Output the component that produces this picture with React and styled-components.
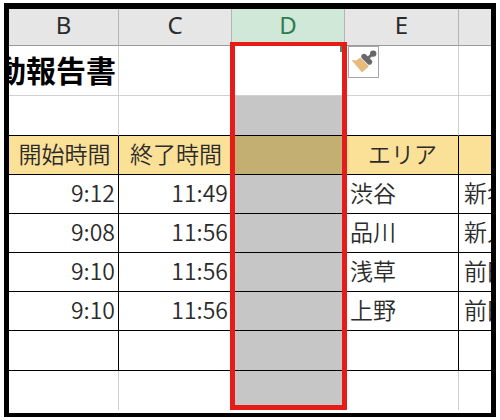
import React from "react";
import styled, { createGlobalStyle } from "styled-components";

const rows = [
  { start: "9:12", end: "11:49", area: "渋谷", name: "新名" },
  { start: "9:08", end: "11:56", area: "品川", name: "新人" },
  { start: "9:10", end: "11:56", area: "浅草", name: "前田" },
  { start: "9:10", end: "11:56", area: "上野", name: "前田" }
];

const BrushIcon = () => (
  <svg width="29" height="30" viewBox="0 0 29 30" aria-hidden="true">
    <path d="M2.5 13 L7 13.4 L11.3 10.6 L20 19.3 L13 25.6 Z" fill="#e6bb7c" />
    <path
      d="M15 9.5 L20.5 15"
      stroke="#686868"
      strokeWidth="5.4"
      strokeLinecap="round"
    />
    <path d="M18 12 L24 6.5" stroke="#686868" strokeWidth="3" />
    <circle cx="24.2" cy="6.6" r="3.2" fill="#686868" />
  </svg>
);

const App = () => (
  <>
    <GlobalStyle />
    <Frame>
      <Sheet>
        <Grid>
          <colgroup>
            <Column size={110} />
            <Column size={113} />
            <Column size={113} />
            <Column size={114} />
            <col />
          </colgroup>
          <thead>
            <tr>
              <Letter>B</Letter>
              <Letter>C</Letter>
              <Letter selected>D</Letter>
              <Letter>E</Letter>
              <Letter />
            </tr>
          </thead>
          <tbody>
            <Row size={50}>
              <Cell>
                <Title>動報告書</Title>
              </Cell>
              <Cell />
              <Cell />
              <Cell />
              <Cell />
            </Row>
            <Row size={40}>
              <Cell above />
              <Cell above />
              <Cell above selected />
              <Cell above />
              <Cell above />
            </Row>
            <Row size={39}>
              <Heading>開始時間</Heading>
              <Heading>終了時間</Heading>
              <Heading selected />
              <Heading>エリア</Heading>
              <Heading />
            </Row>
            {rows.map((row, i) => (
              <Row size={39} key={i}>
                <Time>{row.start}</Time>
                <Time>{row.end}</Time>
                <Ruled selected />
                <Ruled>{row.area}</Ruled>
                <Ruled>{row.name}</Ruled>
              </Row>
            ))}
            <Row size={40}>
              <Ruled />
              <Ruled />
              <Ruled selected />
              <Ruled />
              <Ruled />
            </Row>
            <Row size={39}>
              <Cell last />
              <Cell last />
              <Cell last selected />
              <Cell last />
              <Cell last />
            </Row>
          </tbody>
        </Grid>
        <Highlight />
        <PasteOptions aria-label="書式オプション">
          <BrushIcon />
        </PasteOptions>
      </Sheet>
    </Frame>
  </>
);

const GlobalStyle = createGlobalStyle`
  * {
    box-sizing: border-box;
  }
  body {
    margin: 0;
    background-color: white;
    font-family: "Noto Sans CJK JP", sans-serif;
  }
`;

const Frame = styled.main`
  margin: 3px 4px;
  padding-bottom: 3px;
  border: 5px solid black;
  border-top-width: 6px;
  border-bottom-width: 4px;
  background-color: white;
`;

const Sheet = styled.div`
  position: relative;
  overflow: hidden;
`;

const Grid = styled.table`
  width: 100%;
  table-layout: fixed;
  border-collapse: separate;
  border-spacing: 0;
  color: #2b2b2b;
`;

const Column = styled.col.withConfig({
  shouldForwardProp: prop => prop !== "size"
})`
  width: ${props => props.size}px;
`;

const Row = styled.tr.withConfig({
  shouldForwardProp: prop => prop !== "size"
})`
  height: ${props => props.size}px;
`;

const Letter = styled.th.withConfig({
  shouldForwardProp: prop => prop !== "selected"
})`
  height: 37px;
  padding: 0 0 4px;
  border-right: 1px solid #b4b4b4;
  border-bottom: 1px solid #9a9a9a;
  background-color: ${props => (props.selected ? "#cfe8d8" : "#e6e6e6")};
  color: ${props => (props.selected ? "#2f7d55" : "#2b2b2b")};
  font-family: "Noto Sans", sans-serif;
  font-size: 24px;
  font-weight: 400;
  line-height: 32px;

  &:last-child {
    border-right: none;
  }
`;

const Cell = styled.td.withConfig({
  shouldForwardProp: prop => !["selected", "above", "last"].includes(prop)
})`
  padding: 0;
  border-right: 1px solid #d0d0d0;
  border-bottom: ${props =>
    props.last ? "none" : props.above ? "1px solid black" : "1px solid #d0d0d0"};
  background-color: ${props => (props.selected ? "#c6c6c6" : "white")};

  &:last-child {
    border-right: none;
  }
`;

const Ruled = styled.td.withConfig({
  shouldForwardProp: prop => prop !== "selected"
})`
  padding: 0 3px 4px 5px;
  border-right: 1px solid black;
  border-bottom: 1px solid black;
  background-color: ${props => (props.selected ? "#c6c6c6" : "white")};
  font-size: 23px;
  font-weight: 350;
  line-height: 32px;
  white-space: nowrap;
  overflow: hidden;

  &:last-child {
    border-right: none;
  }
`;

const Time = styled(Ruled)`
  text-align: right;
`;

const Heading = styled(Ruled)`
  background-color: ${props => (props.selected ? "#c3af72" : "#fbe197")};
  text-align: center;
`;

const Title = styled.div`
  display: flex;
  justify-content: flex-end;
  padding: 0 2px 4px 0;
  overflow: hidden;
  color: black;
  font-size: 30px;
  font-weight: 700;
  line-height: 40px;
  white-space: nowrap;
`;

const Highlight = styled.div`
  position: absolute;
  top: 33px;
  bottom: 0;
  left: 221px;
  width: 117px;
  border: 5px solid #e61c18;
  border-top-width: 4px;

  &::after {
    content: "";
    position: absolute;
    top: 0;
    right: 0;
    width: 2px;
    height: 6px;
    background-color: #4f8a66;
  }
`;

const PasteOptions = styled.button`
  position: absolute;
  top: 37px;
  left: 339px;
  display: flex;
  justify-content: center;
  align-items: center;
  width: 31px;
  height: 32px;
  padding: 0;
  border: 1px solid #a6a6a6;
  background-color: white;
`;

export default App;
